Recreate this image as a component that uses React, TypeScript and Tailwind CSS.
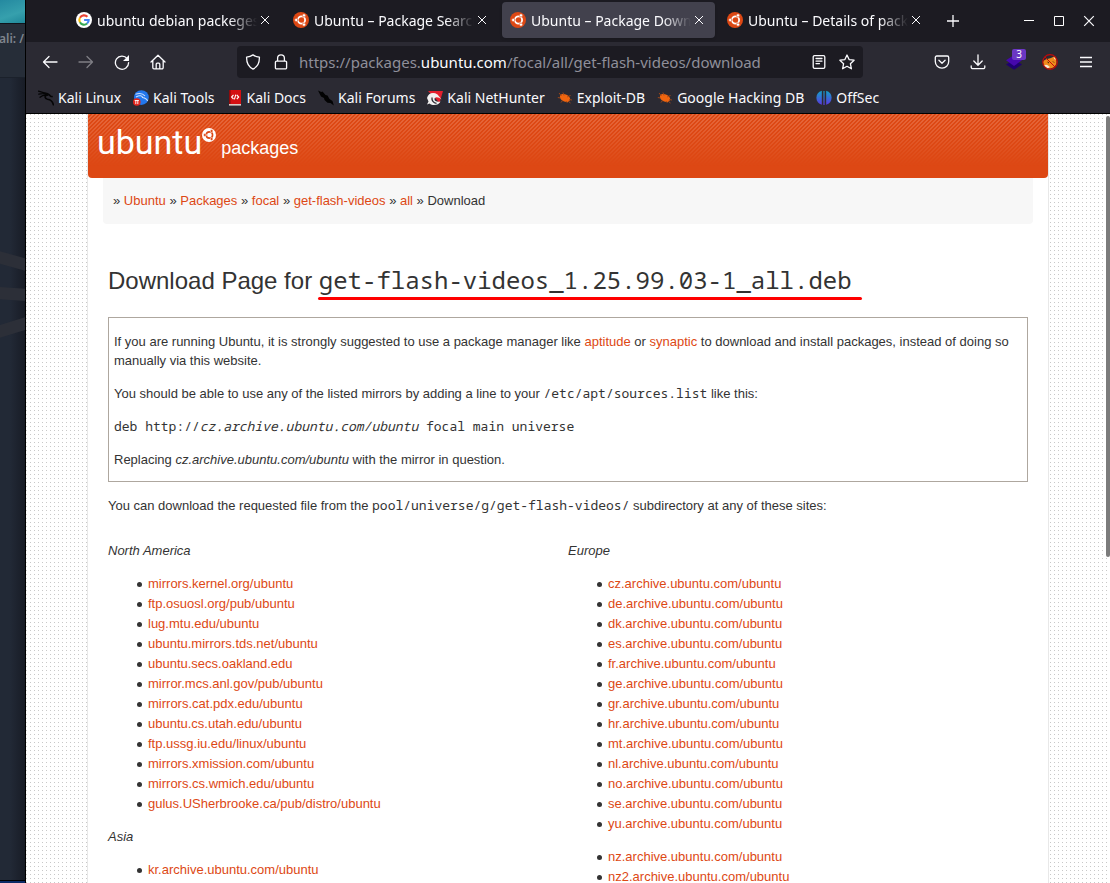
import type { ReactNode } from "react";

const uiFont = "font-['Noto_Sans',sans-serif]";
const mono = "font-['Noto_Sans_Mono','DejaVu_Sans_Mono',monospace]";

function UbuntuMark({ className, bg, fg }: { className: string; bg: string; fg: string }) {
  return (
    <svg viewBox="0 0 32 32" className={className} aria-hidden="true">
      <circle cx="16" cy="16" r="16" fill={bg} />
      <circle cx="17" cy="16" r="7.2" fill="none" stroke={fg} strokeWidth="3.6" />
      <g stroke={bg} strokeWidth="1.6">
        <path d="M11 16L4 16M20 10.800L23.500 4.700M20 21.200L23.500 27.300" />
      </g>
      <circle cx="6.500" cy="16" r="3.300" fill={fg} stroke={bg} strokeWidth="1.200" />
      <circle cx="22" cy="6.800" r="3.300" fill={fg} stroke={bg} strokeWidth="1.200" />
      <circle cx="22" cy="25.200" r="3.300" fill={fg} stroke={bg} strokeWidth="1.200" />
    </svg>
  );
}

function GoogleMark() {
  return (
    <svg viewBox="0 0 32 32" className="size-4 shrink-0" aria-hidden="true">
      <circle cx="16" cy="16" r="16" fill="#fff" />
      <g fill="none" strokeWidth="4.2">
        <path d="M22.8 9.6A9.4 9.4 0 0 0 7.9 11.4" stroke="#ea4335" />
        <path d="M7.9 11.4A9.4 9.4 0 0 0 7.9 20.6" stroke="#fbbc05" />
        <path d="M7.9 20.6A9.4 9.4 0 0 0 22.2 23.1" stroke="#34a853" />
        <path d="M22.2 23.1A9.4 9.4 0 0 0 25.4 16H16.2" stroke="#4285f4" />
      </g>
    </svg>
  );
}

const tabs = [
  { title: "ubuntu debian packeges", google: true, active: false },
  { title: "Ubuntu – Package Search", google: false, active: false },
  { title: "Ubuntu – Package Download", google: false, active: true },
  { title: "Ubuntu – Details of package", google: false, active: false },
];

function Cross({ className }: { className: string }) {
  return (
    <svg viewBox="0 0 10 10" className={className} fill="none" stroke="#fbfbfe" strokeWidth="1" aria-hidden="true">
      <path d="M1 1l8 8M9 1l-8 8" />
    </svg>
  );
}

function TabStrip() {
  return (
    <div className="flex h-[42px] shrink-0 items-center bg-[#1c1b22] pl-[42px]">
      <div className="flex min-w-0 gap-1 pb-0.5">
        {tabs.map((t) => (
          <div
            key={t.title}
            className={
              t.active
                ? "flex h-9 w-[213px] min-w-0 items-center rounded bg-[#42414d] pr-2 pl-2 shadow"
                : "flex h-9 w-[213px] min-w-0 items-center rounded pr-2 pl-2"
            }
          >
            {t.google ? <GoogleMark /> : <UbuntuMark className="size-4 shrink-0" bg="#dd4814" fg="#fff" />}
            <span className="ml-[5px] min-w-0 flex-1 overflow-hidden whitespace-nowrap [mask-image:linear-gradient(to_left,transparent,black_28px)]">
              {t.title}
            </span>
            <button aria-label="Close tab" className="flex w-4 justify-center">
              <Cross className="size-[10px]" />
            </button>
          </div>
        ))}
      </div>
      <button aria-label="New tab" className="ml-[5px] flex size-8 shrink-0 items-center justify-center">
        <svg viewBox="0 0 12 12" className="size-3" stroke="#fbfbfe" strokeWidth="1.3" aria-hidden="true">
          <path d="M6 0v12M0 6h12" />
        </svg>
      </button>
      <div className="ml-auto flex shrink-0 pr-[6px]">
        <button aria-label="Minimize" className="flex h-8 w-[30px] items-center justify-center">
          <svg viewBox="0 0 10 10" className="size-[10px]" stroke="#fff" aria-hidden="true"><path d="M0 4.5h10" /></svg>
        </button>
        <button aria-label="Maximize" className="flex h-8 w-[30px] items-center justify-center">
          <svg viewBox="0 0 10 10" className="size-[10px]" stroke="#fff" fill="none" aria-hidden="true"><path d="M.5.5h9v9h-9z" /></svg>
        </button>
        <button aria-label="Close window" className="flex h-8 w-[30px] items-center justify-center">
          <Cross className="size-3" />
        </button>
      </div>
    </div>
  );
}

function Tool({ label, dim, children }: { label: string; dim?: boolean; children: ReactNode }) {
  return (
    <button
      aria-label={label}
      className={dim ? "relative flex size-8 shrink-0 items-center justify-center opacity-40" : "relative flex size-8 shrink-0 items-center justify-center"}
    >
      {children}
    </button>
  );
}

function Line({ d, fill }: { d: string; fill?: string }) {
  return (
    <svg
      viewBox="0 0 16 16"
      className="size-4 shrink-0"
      fill="none"
      stroke="#fbfbfe"
      strokeWidth="1.3"
      strokeLinecap="round"
      strokeLinejoin="round"
      aria-hidden="true"
    >
      <path d={d} />
      {fill && <path d={fill} fill="#fbfbfe" stroke="none" />}
    </svg>
  );
}

function NavBar() {
  return (
    <div className="flex h-10 shrink-0 items-center bg-[#2b2a33] px-2">
      <div className="flex gap-1">
        <Tool label="Back"><Line d="M15 8H1.5M7 2.5L1.5 8L7 13.5" /></Tool>
        <Tool label="Forward" dim><Line d="M1 8H14.5M9 2.5L14.5 8L9 13.5" /></Tool>
        <Tool label="Reload"><Line d="M13.2 4.6A6.6 6.6 0 1 0 14.6 8.6" fill="M15 1v5.4a.6.6 0 0 1-.6.6H9z" /></Tool>
        <Tool label="Home"><Line d="M1 8L8 1.2L15 8M2.8 6.8V13.6a1.2 1.2 0 0 0 1.2 1.2h8a1.2 1.2 0 0 0 1.2-1.2V6.8M6.2 14.6V10.2a1 1 0 0 1 1-1h1.6a1 1 0 0 1 1 1v4.4" /></Tool>
      </div>
      <div className="mr-[63px] ml-[63px] flex h-8 min-w-0 flex-1 items-center rounded bg-[#1c1b22] px-2">
        <Line d="M8 .9C10 2.3 12 2.9 14.4 3.1C14.6 9 12.4 13 8 15.1C3.6 13 1.4 9 1.6 3.1C4 2.9 6 2.3 8 .9z" />
        <span className="ml-3 flex"><Line d="M3.6 7.1h8.8a1.2 1.2 0 0 1 1.2 1.2v5.4a1.2 1.2 0 0 1-1.2 1.2H3.6a1.2 1.2 0 0 1-1.2-1.2V8.300a1.200 1.200 0 0 1 1.200-1.200M4.600 7V4.200a3.400 3.400 0 0 1 6.800 0V7" /></span>
        <p className="ml-[10px] min-w-0 flex-1 truncate text-[15px] text-[#8f8f9a]">
          https://packages.<span className="text-[#fbfbfe]">ubuntu.com</span>/focal/all/get-flash-videos/download
        </p>
        <button aria-label="Reader view" className="flex"><Line d="M3.500 1.600h9a1.300 1.300 0 0 1 1.300 1.300v10.200a1.300 1.300 0 0 1-1.300 1.300h-9a1.300 1.300 0 0 1-1.300-1.300V2.900a1.300 1.300 0 0 1 1.300-1.300zM5 4.500h6M5 7.100h6M5 9.600h3.500" /></button>
        <button aria-label="Bookmark this page" className="ml-3 flex"><Line d="M8 1L10.100 5.600L15.100 6.200L11.400 9.700L12.400 14.800L8 12.300L3.600 14.800L4.600 9.700L.9 6.200L5.900 5.600z" /></button>
      </div>
      <div className="flex gap-1">
        <Tool label="Save to Pocket"><Line d="M2.700 2h10.600a1.400 1.400 0 0 1 1.400 1.400V7.500a6.700 6.700 0 0 1-13.400 0V3.400a1.400 1.400 0 0 1 1.400-1.400zM4.900 6.300L8 9.300L11.100 6.300" /></Tool>
        <Tool label="Downloads"><Line d="M8 .8V11M3.800 7L8 11.200L12.200 7M1.200 11.800V13.200a1.500 1.500 0 0 0 1.500 1.500h10.600a1.500 1.500 0 0 0 1.500-1.500V11.800" /></Tool>
        <Tool label="Wappalyzer">
          <svg viewBox="0 0 16 16" className="size-4" aria-hidden="true">
            <path d="M8 5.500L16 10.500L8 15.800L0 10.500z" fill="#1f0070" />
            <path d="M8 1L16 6.300L8 12L0 6.300z" fill="#4608ad" />
          </svg>
          <span className="absolute top-[3px] right-1 h-[11px] w-[14px] rounded-xs bg-[#6b37c4] text-center text-[10px] leading-[11px] text-white">3</span>
        </Tool>
        <Tool label="FoxyProxy">
          <svg viewBox="0 0 16 16" className="size-4" aria-hidden="true">
            <path d="M1 8C3 4.500 7 5 9 4L13 2L14.500 7C15 12 11 14.500 7 14.500C3.500 14.500 1.500 12 1 8z" fill="#f08a1c" />
            <path d="M2 11.500C5 9.500 6 12 8 13L5.500 14.500zM11.500 3.500l2 .3-.2 2.500z" fill="#f3ead8" />
            <path d="M5.500 8l1.500 1M11 7.500l1 1" stroke="#3a1a08" />
            <circle cx="8" cy="8" r="7.300" fill="none" stroke="#c00a0a" strokeWidth="1.200" />
            <path d="M3 3L13 13" stroke="#c00a0a" strokeWidth="1" />
          </svg>
        </Tool>
        <Tool label="Open application menu">
          <svg viewBox="0 0 12 12" className="size-3" stroke="#fbfbfe" strokeWidth="1.300" aria-hidden="true"><path d="M0 1.500h12M0 6h12M0 10.500h12" /></svg>
        </Tool>
      </div>
    </div>
  );
}

function BookmarkIcon({ kind }: { kind: string }) {
  return (
    <svg viewBox="0 0 16 16" className="size-4 shrink-0" aria-hidden="true">
      {kind === "linux" && (
        <g fill="none" stroke="#050506" strokeLinecap="round">
          <path d="M.5 1.200L7 3.200M.8 4.200C4 3.400 7 3.600 9.500 5M2 7.200C4 5.600 6 5 8.500 5.200" strokeWidth="1.300" />
          <path d="M7 3.400C10.500 3.600 11.500 4.600 12.500 6.200L14 6.600M9.500 5C6 5.600 6.600 8.800 9.500 9.200C13 9.600 14.600 11 15.400 14.800" strokeWidth="1.600" />
        </g>
      )}
      {kind === "tools" && (
        <>
          <circle cx="8.400" cy="7.600" r="7.400" fill="#2277ee" />
          <path d="M2.500 4.200C6 3 10 3.600 12 6M3 7C6.500 5 9.500 5.500 9.500 7.500C12 8 14 9 14.600 11" fill="none" stroke="#cfe2ff" strokeWidth="1.100" />
          <circle cx="3.800" cy="12" r="3.800" fill="#e2231a" />
          <path d="M1.700 10.500h4.200M2.800 10.500v3.600M4.800 10.500v3.600" stroke="#fff" strokeWidth=".9" />
        </>
      )}
      {kind === "docs" && (
        <>
          <path d="M2 0h12v14H2z" fill="#d40f12" />
          <path d="M2 0h1.600v14H2z" fill="#8e0b0d" />
          <path d="M2 14h12v1.600H2z" fill="#d9c9c4" />
          <path d="M6.500 5L4.600 7L6.500 9M9.800 5L11.700 7L9.800 9M8.800 4.600L7.400 9.400" fill="none" stroke="#fff" strokeWidth="1.100" />
        </>
      )}
      {kind === "forums" && <path d="M0 .6L3.200 2L4.500 1.600L7.500 5L9.500 5.600L11.500 9L14.500 11L15.800 15.400L12.500 13L9.500 12.800L6.500 10L6 8L3 6.500L1.500 3.500z" fill="#020203" />}
      {kind === "nethunter" && (
        <>
          <path d="M1 1H16L12.500 13L8 8z" fill="#e5202e" />
          <path d="M0 8C1 3.500 6 1.500 10.500 4.500L14.600 9.500C11.500 7 9 6.500 7.500 8.500C7 11 10 12.500 13.500 11.500C12 15 6 16.500 2.500 13.500L0 14.500L1.500 11.500z" fill="#f2f0f0" />
          <path d="M5 7.500C4.500 10.500 6.500 13 9.500 13.400" fill="none" stroke="#2b2a33" strokeWidth="1.300" />
        </>
      )}
      {kind === "bug" && (
        <>
          <ellipse cx="8" cy="8" rx="5.400" ry="3.600" transform="rotate(24 8 8)" fill="#f0650f" />
          <path d="M4.500 6L2 3M7 5.500L6 2.500M10 7L13.500 5.500M12 9.500L15 10M9 11L10.500 13M6 10L4 12.500M3.500 8L.8 7.500M11 11L13.500 13" fill="none" stroke="#a84a15" strokeWidth=".9" />
        </>
      )}
      {kind === "offsec" && (
        <>
          <defs>
            <linearGradient id="offsec-blue" x1="0" y1="0" x2="0" y2="1">
              <stop offset="0" stopColor="#12a0c8" />
              <stop offset="1" stopColor="#5b39e0" />
            </linearGradient>
          </defs>
          <g fill="url(#offsec-blue)">
            <path d="M5.800.8V14.800C2.500 13.800.4 11.200.4 7.800S2.500 1.800 5.800.8z" />
            <path d="M10.200.8V14.800C13.500 13.800 15.600 11.200 15.600 7.800S13.500 1.800 10.200.8z" />
            <path d="M7.400 1h1.200V15H7.400z" />
          </g>
        </>
      )}
    </svg>
  );
}

const bookmarks = [
  ["linux", "Kali Linux"],
  ["tools", "Kali Tools"],
  ["docs", "Kali Docs"],
  ["forums", "Kali Forums"],
  ["nethunter", "Kali NetHunter"],
  ["bug", "Exploit-DB"],
  ["bug", "Google Hacking DB"],
  ["offsec", "OffSec"],
];

function BookmarksBar() {
  return (
    <nav className="flex h-8 shrink-0 items-center gap-3 border-b border-black bg-[#2b2a33] pl-3 whitespace-nowrap">
      {bookmarks.map(([kind, label]) => (
        <a key={label} href="#" className="flex items-center gap-1">
          <BookmarkIcon kind={kind} />
          {label}
        </a>
      ))}
    </nav>
  );
}

function A({ children }: { children: ReactNode }) {
  return <a href="#" className="text-[#dd4814]">{children}</a>;
}

function MirrorList({ items }: { items: string[] }) {
  return (
    <ul className="pl-[29px] leading-5">
      {items.map((m) => (
        <li key={m} className="flex items-center gap-[6px] before:size-[5px] before:rounded-full before:bg-[#333]">
          <A>{m}</A>
        </li>
      ))}
    </ul>
  );
}

const northAmerica = [
  "mirrors.kernel.org/ubuntu",
  "ftp.osuosl.org/pub/ubuntu",
  "lug.mtu.edu/ubuntu",
  "ubuntu.mirrors.tds.net/ubuntu",
  "ubuntu.secs.oakland.edu",
  "mirror.mcs.anl.gov/pub/ubuntu",
  "mirrors.cat.pdx.edu/ubuntu",
  "ubuntu.cs.utah.edu/ubuntu",
  "ftp.ussg.iu.edu/linux/ubuntu",
  "mirrors.xmission.com/ubuntu",
  "mirrors.cs.wmich.edu/ubuntu",
  "gulus.USherbrooke.ca/pub/distro/ubuntu",
];
const europe = ["cz", "de", "dk", "es", "fr", "ge", "gr", "hr", "mt", "nl", "no", "se", "yu"].map((c) => c + ".archive.ubuntu.com/ubuntu");
const oceania = ["nz.archive.ubuntu.com/ubuntu", "nz2.archive.ubuntu.com/ubuntu"];

function Page() {
  return (
    <div className="relative min-h-0 flex-1 overflow-hidden bg-white bg-[linear-gradient(to_right,transparent_1px,white_1px),linear-gradient(#c8c8c8_1px,white_1px)] bg-size-[4px_4px] font-['Liberation_Sans',Arial,sans-serif] text-[13px] leading-[19px] text-[#333]">
      <div className="mx-auto min-h-full max-w-[962px] border-x border-[#e8e8e8] bg-white">
        <header className="relative h-16 overflow-hidden rounded-b bg-[#dd4814] text-white">
          <div className="absolute inset-0 bg-[linear-gradient(135deg,#f08a68_25%,transparent_25%,transparent_50%,#f08a68_50%,#f08a68_75%,transparent_75%)] bg-size-[4px_4px] opacity-50 [mask-image:linear-gradient(black,transparent_52px)]" />
          <a href="#" className="relative flex items-baseline pl-[9px]">
            <span className="font-[Roboto,sans-serif] text-[34px] leading-[56px]">ubuntu</span>
            <UbuntuMark className="size-[14px] -translate-y-3" bg="#fff" fg="#dd4814" />
            <span className="ml-[5px] text-lg">packages</span>
          </a>
        </header>
        <nav className="mx-[15px] rounded-b bg-[#f7f7f7] px-[10px] pt-[13px] pb-[14px]">
          » <A>Ubuntu</A> » <A>Packages</A> » <A>focal</A> » <A>get-flash-videos</A> » <A>all</A> » Download
        </nav>
        <main className="px-5">
          <h1 className="pt-[38px] text-2xl leading-9">
            Download Page for{" "}
            <span className={mono + " relative"}>
              get-flash-videos_1.25.99.03-1_all.deb
              <span className="absolute -right-[10px] -bottom-1 -left-px h-[3px] rounded-xs bg-[#f00]" />
            </span>
          </h1>
          <section className="mt-[18px] space-y-[14px] border border-[#aea79f] px-[5px] pt-[14px] pb-3">
            <p>
              If you are running Ubuntu, it is strongly suggested to use a package manager like <A>aptitude</A> or <A>synaptic</A> to download and
              install packages, instead of doing so manually via this website.
            </p>
            <p>
              You should be able to use any of the listed mirrors by adding a line to your <code className={mono + " leading-none"}>/etc/apt/sources.list</code> like this:
            </p>
            <p className={mono}>
              deb http://<em>cz.archive.ubuntu.com/ubuntu</em> focal main universe
            </p>
            <p>
              Replacing <em>cz.archive.ubuntu.com/ubuntu</em> with the mirror in question.
            </p>
          </section>
          <p className="mt-[14px]">
            You can download the requested file from the <code className={mono + " leading-none"}>pool/universe/g/get-flash-videos/</code> subdirectory at any of these sites:
          </p>
          <div className="mt-[26px] grid grid-cols-2">
            <div className="space-y-[13px]">
              <p className="leading-5 italic">North America</p>
              <MirrorList items={northAmerica} />
              <p className="leading-5 italic">Asia</p>
              <MirrorList items={["kr.archive.ubuntu.com/ubuntu"]} />
            </div>
            <div className="space-y-[13px]">
              <p className="leading-5 italic">Europe</p>
              <MirrorList items={europe} />
              <MirrorList items={oceania} />
            </div>
          </div>
        </main>
      </div>
      <div className="absolute top-[2px] right-0 h-[441px] w-1 rounded-sm bg-[#7b7b7b]" />
    </div>
  );
}

function Desktop() {
  return (
    <aside className="relative flex w-[26px] shrink-0 flex-col overflow-hidden border-r border-black bg-[#222936]">
      <div className="h-6 shrink-0 border-b border-[#10141b] bg-[linear-gradient(160deg,#2489a0,#36a0ad_60%,#1f8799)]" />
      <div className="flex h-[54px] shrink-0 justify-end border-b border-[#1b212b] bg-[#262d38] pt-[7px] pr-px text-xs leading-4 font-semibold whitespace-nowrap text-[#7f858e]">kali: /</div>
      <div className="flex-1 bg-[linear-gradient(to_right,transparent_40%,#181c26)]" />
      <svg viewBox="0 0 25 100" className="absolute top-[245px] left-0 h-[100px] w-[25px]" fill="none" stroke="#2c2f38" strokeWidth="12" aria-hidden="true">
        <path d="M-2 12L27 20M-2 48L27 50M-2 87L27 78" />
      </svg>
      <div className="h-[3px] shrink-0 border-t border-black bg-[#0b2b66]" />
    </aside>
  );
}

export default function App() {
  return (
    <div className={uiFont + " flex h-screen overflow-hidden text-[14px] text-[#fbfbfe]"}>
      <Desktop />
      <div className="flex min-w-0 flex-1 flex-col">
        <TabStrip />
        <NavBar />
        <BookmarksBar />
        <Page />
      </div>
    </div>
  );
}
